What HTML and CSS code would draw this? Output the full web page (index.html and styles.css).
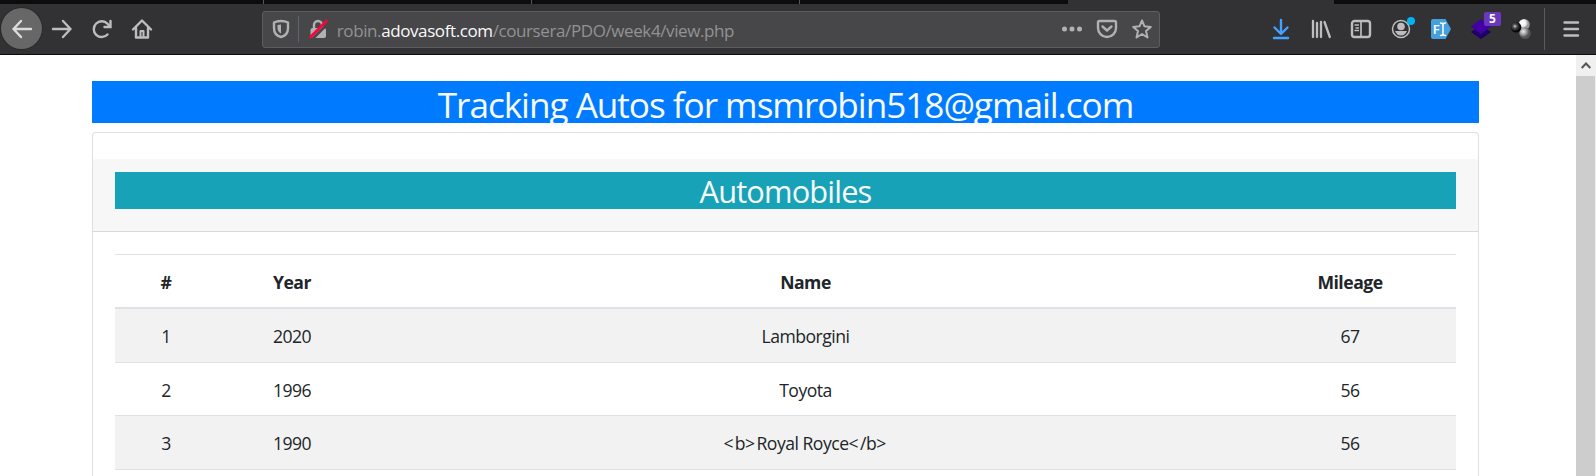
FILE: index.html
```html
<!DOCTYPE html>
<html lang="en">
<head>
<meta charset="utf-8">
<title>Tracking Autos</title>
<link rel="stylesheet" href="styles.css">
</head>
<body>
<div class="tabs"><i class="tab first"></i><i class="tab"></i><i class="tab"></i><i class="tab active"></i></div>
<header class="toolbar">
  <nav class="nav">
    <span class="btn back"><svg viewBox="0 0 20 20"><path d="M19 10H1.500M9 2L1.500 10L9 18"/></svg></span>
    <span class="btn"><svg viewBox="0 0 20 20"><path d="M1 10H18.500M11 2L18.500 10L11 18"/></svg></span>
    <span class="btn"><svg viewBox="0 0 20 20"><path d="M15.500 15.500A7.900 7.900 0 1 1 15.500 4.800L17 6.500"/><path d="M18.500 2V8H12.500" stroke-linejoin="miter"/></svg></span>
    <span class="btn"><svg viewBox="0 0 20 20"><path d="M1 10.500L10 1.500L19 10.500M4 9V18.500H16V9"/><path d="M8.500 18V12H11.500V18" stroke-width="2"/></svg></span>
  </nav>
  <div class="urlbar">
    <svg class="shield" viewBox="0 0 18 20"><path d="M9 2C6.500 2 4 2.500 2 3.500V9C2 13.500 4.500 17 9 18C13.500 17 16 13.500 16 9V3.500C14 2.500 11.500 2 9 2Z"/><path class="fill" d="M9 5.500L5.500 6V9C5.500 11.500 6.800 13.500 9 14.500Z" stroke="none"/></svg>
    <i class="divider"></i>
    <svg class="lock" viewBox="0 0 20 20"><path d="M6 9V6A4 4 0 0 1 14 6V9"/><rect class="fill" x="2.500" y="9" width="15.500" height="10" rx="2" stroke="none"/><path class="gap" d="M4 20.500L20 4.500"/><path class="slash" d="M2.500 18L18.500 2"/></svg>
    <div class="url">robin.<b>adovasoft.com</b>/coursera/PDO/week4/view.php</div>
    <div class="actions">
      <svg viewBox="0 0 20 20"><g class="fill" stroke="none"><circle cx="2.500" cy="10" r="2.500"/><circle cx="10" cy="10" r="2.500"/><circle cx="17.500" cy="10" r="2.500"/></g></svg>
      <svg viewBox="0 0 20 20"><path d="M1 3.500Q1 2 2.500 2H17.500Q19 2 19 3.500V9A9 9 0 0 1 1 9Z"/><path d="M5.500 7.500L10 11.500L14.500 7.500"/></svg>
      <svg viewBox="0 0 20 20"><path stroke-width="2" d="M10 1.500L12.500 7.300L18.800 7.900L14 12L15.500 18.500L10 15L4.500 18.500L6 12L1.200 7.900L7.500 7.300Z"/></svg>
    </div>
  </div>
  <div class="tools">
    <span class="btn"><svg class="download" viewBox="0 0 20 20"><path d="M10 1V14M3.500 8.500L10 15L16.500 8.500M3 19H17"/></svg></span>
    <span class="btn"><svg viewBox="0 0 20 20"><path d="M2 2V18M6 4V18M10 3V18M13.500 3L18.800 18" stroke-width="2.300"/></svg></span>
    <span class="btn"><svg viewBox="0 0 20 20"><rect x="1" y="2" width="18" height="16" rx="2.500"/><path d="M10 2V18" stroke-width="1.700"/><path stroke-width="1.300" d="M4 6H7.500M5 9H7.500M4 11.500H7.500"/></svg></span>
    <span class="btn"><svg viewBox="0 0 20 20"><circle cx="10" cy="10" r="8.500" stroke-width="1.500"/><circle class="fill" cx="10" cy="7.500" r="3.800" stroke="none"/><path class="fill" stroke="none" d="M4 12H16Q14 16.500 10 16.500T4 12Z"/><circle cx="20" cy="2" r="4" fill="#00b3f4" stroke="none"/></svg></span>
    <span class="btn"><svg viewBox="0 0 20 20"><path d="M2 0H14.500L20 10L14.500 20H2Q0 20 0 18V2Q0 0 2 0Z" fill="#45a1de" stroke="none"/><text class="fi" x="1.800" y="15">F</text><path stroke="#fff" stroke-width="1.500" d="M9.500 4Q12 4 12 5.500Q12 4 14.500 4M12 5V15.500M9.500 16.500Q12 16.500 12 15Q12 16.500 14.500 16.500"/></svg></span>
    <span class="btn"><svg viewBox="0 0 20 20"><path d="M0 13L10 6L20 13L10 20Z" fill="#1e0068" stroke="none"/><path d="M0 7.500L10 0L20 7.500L10 15Z" fill="#4200a5" stroke="none"/></svg><em class="badge">5</em></span>
    <span class="btn"><svg viewBox="0 0 20 20"><defs><radialGradient id="dark" cx=".4" cy=".4"><stop offset="0" stop-color="#ddd"/><stop offset=".35" stop-color="#555"/><stop offset="1" stop-color="#050505"/></radialGradient><radialGradient id="light" cx=".35" cy=".35"><stop offset="0" stop-color="#fff"/><stop offset=".6" stop-color="#eee"/><stop offset="1" stop-color="#999"/></radialGradient><radialGradient id="mid" cx=".35" cy=".35"><stop offset="0" stop-color="#eee"/><stop offset=".6" stop-color="#999"/><stop offset="1" stop-color="#555"/></radialGradient></defs><g stroke="none"><circle cx="13.200" cy="5.500" r="5.500" fill="url(#light)"/><circle cx="14" cy="14.200" r="5.700" fill="url(#mid)"/><circle cx="5" cy="8.300" r="5.300" fill="url(#dark)"/></g></svg></span>
    <i class="separator"></i>
    <span class="btn menu"><svg viewBox="0 0 20 20"><path d="M3.500 3.500H17M3.500 10H17M3.500 16.500H17"/></svg></span>
  </div>
</header>
<div class="viewport">
  <main class="page">
    <h1 class="title">Tracking Autos for msmrobin518@gmail.com</h1>
    <section class="card">
      <div class="card-header"><h2 class="subtitle">Automobiles</h2></div>
      <table class="autos">
        <colgroup><col class="c-num"><col class="c-year"><col class="c-name"><col class="c-mileage"></colgroup>
        <thead><tr><th>#</th><th>Year</th><th>Name</th><th>Mileage</th></tr></thead>
        <tbody>
          <tr><td>1</td><td>2020</td><td>Lamborgini</td><td>67</td></tr>
          <tr><td>2</td><td>1996</td><td>Toyota</td><td>56</td></tr>
          <tr><td>3</td><td>1990</td><td class="markup"><i>&lt;</i>b<i>&gt;</i>Royal Royce<i>&lt;</i>/b<i>&gt;</i></td><td>56</td></tr>
        </tbody>
      </table>
    </section>
  </main>
  <div class="scrollbar"><div class="up"><svg viewBox="0 0 10 7"><path d="M.7 6L5 1.500L9.300 6"/></svg></div><div class="thumb"></div></div>
</div>
</body>
</html>
```
FILE: styles.css
```css
* { box-sizing: border-box; }
html, body { margin: 0; height: 476px; overflow: hidden; }
body { display: flex; flex-direction: column; background: #fff; color: #212529; font-family: "Open Sans", "Noto Sans", sans-serif; font-size: 17.6px; }
svg { display: block; width: 20px; height: 20px; overflow: visible; fill: none; stroke: #bdbdbe; stroke-width: 2.4; stroke-linecap: round; stroke-linejoin: round; }
.fill { fill: #bdbdbe; }

.tabs { display: flex; height: 4px; flex: none; background: #0c0c0d; }
.tab { width: 268px; border-right: 1px solid #55555a; }
.tab.first { width: 264px; }
.tab.active { margin-left: 268px; width: 266px; border: 0; background: #323234; }

.toolbar { display: flex; align-items: center; height: 51px; flex: none; background: #323234; border-bottom: 1px solid #0c0c0d; }
.nav { display: flex; width: 262px; padding-left: 1px; }
.btn { position: relative; display: flex; align-items: center; justify-content: center; width: 40px; height: 42px; }
.back { border-radius: 50%; height: 41px; width: 41px; background: #676767; box-shadow: 0 0 0 1px #29292b; }
.back svg { stroke: #dcdcdc; }

.urlbar { display: flex; align-items: center; width: 899px; height: 37px; padding: 0 7px 0 9px; background: #474749; border: 1px solid #5d5d5f; border-radius: 3px; }
.urlbar svg { stroke: #b1b1b3; }
.urlbar .fill { fill: #b1b1b3; }
.shield { width: 18px; }
.divider { width: 1px; height: 26px; margin: 0 9px 0 8px; background: #5c6675; }
.urlbar .lock .gap { stroke: #474749; stroke-width: 2.5; }
.urlbar .lock .slash { stroke: #ff0039; stroke-width: 2.7; }
.url { flex: 1; margin-left: 9px; padding-top: 2px; color: #929293; font-size: 17px; letter-spacing: -.4px; white-space: nowrap; }
.url b { color: #f9f9fa; font-weight: 400; }
.actions { display: flex; gap: 15px; }

.tools { display: flex; align-items: center; margin-left: 100px; }
.tools svg { margin-left: 1px; }
.download { stroke: #45a1ff; }
.fi { fill: #fff; stroke: none; font: 600 13px "Open Sans", sans-serif; }
.badge { position: absolute; left: 24px; top: 4px; width: 17px; height: 14px; border-radius: 2px; background: #6a38bc; color: #fff; font: bold 12px/14px "Open Sans", sans-serif; text-align: center; }
.separator { width: 1px; height: 42px; margin-left: 4px; background: #5b5b5d; }
.menu { width: 51px; }

.viewport { display: flex; flex: 1; min-height: 0; }
.page { display: flex; flex-direction: column; flex: 1; padding: 26px 97px 0 92px; }
h1, h2 { margin: 0; color: #f8f9fa; font-weight: 400; text-align: center; white-space: nowrap; }
.title { height: 42px; background: #007bff; font-size: 35.2px; line-height: 46px; letter-spacing: -1.05px; }
.card { flex: 1; min-height: 0; margin-top: 9px; padding-top: 26px; border: 1px solid #dfdfdf; border-bottom: 0; border-radius: 4px 4px 0 0; }
.card-header { height: 73px; padding: 13px 22px 0; background: #f7f7f7; border-bottom: 1px solid #d9d9d9; border-radius: 3px 3px 0 0; }
.subtitle { height: 37px; background: #17a2b8; font-size: 30.8px; line-height: 39px; letter-spacing: -.85px; }

.autos { width: 1341px; margin: 22px 22px 0; table-layout: fixed; border-collapse: separate; border-spacing: 0; text-align: center; letter-spacing: -.5px; }
.c-num { width: 102px; }
.c-year { width: 150px; }
.c-name { width: 877px; }
.c-mileage { width: 212px; }
.autos th, .autos td { height: 53px; padding: 2px 0 0; border-top: 1px solid #dee2e6; }
.autos th { height: 55px; padding: 1px 0 0; border-bottom: 2px solid #dee2e6; font-weight: 700; }
.autos tbody tr:first-child td { padding-top: 0; border-top: 0; }
.autos tbody tr:nth-child(odd) { background: #f2f2f2; }
.autos tbody tr:last-child td { height: 55px; padding-top: 0; border-bottom: 1px solid #dee2e6; }
.autos .markup i { font-style: normal; letter-spacing: 1.3px; }

.scrollbar { display: flex; flex-direction: column; width: 20px; background: #f0f0f0; }
.up { display: flex; align-items: center; justify-content: center; height: 21px; }
.up svg { width: 10px; height: 7px; stroke: #555; stroke-width: 2; stroke-linecap: butt; stroke-linejoin: miter; }
.thumb { flex: 1; width: 19px; background: #cdcdcd; }
```
